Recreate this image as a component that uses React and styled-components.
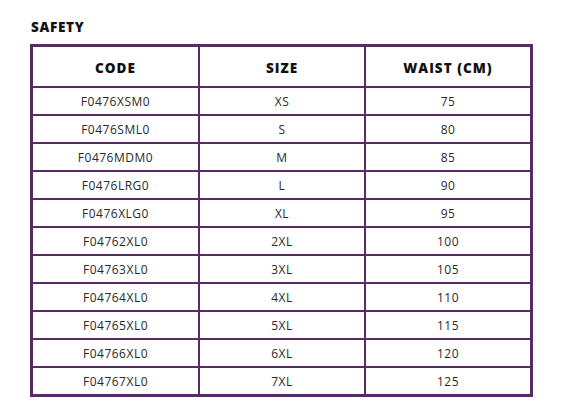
import styled, { createGlobalStyle } from "styled-components";

const Global = createGlobalStyle`
  body {
    margin: 0;
    background: #fff;
    font-family: "Open Sans", "Liberation Sans", sans-serif;
    color: #1e1e1e;
  }
`;

const Page = styled.div`
  padding: 19px 30px 0 30px;
  width: 503px;
`;

const Title = styled.h2`
  margin: 0 0 9px 1px;
  font-size: 13.5px;
  line-height: 16px;
  font-weight: 800;
  letter-spacing: 0.7px;
  color: #111;
`;

const Grid = styled.div`
  display: grid;
  grid-template-columns: 165px 164px 164px;
  grid-auto-rows: 26px;
  grid-template-rows: 39px;
  gap: 2px;
  border: 3px solid #582a66;
  background: #582a66;
`;

const Cell = styled.div`
  background: #fff;
  display: flex;
  align-items: center;
  justify-content: center;
  font-size: ${(p) => (p.head ? "13.5px" : "12px")};
  font-weight: ${(p) => (p.head ? 800 : 400)};
  letter-spacing: ${(p) => (p.head ? "1px" : "0.5px")};
  color: ${(p) => (p.head ? "#111" : "#2a2a2a")};
  padding-top: ${(p) => (p.head ? "2px" : "1px")};
`;

const rows = [
  ["F0476XSM0", "XS", "75"],
  ["F0476SML0", "S", "80"],
  ["F0476MDM0", "M", "85"],
  ["F0476LRG0", "L", "90"],
  ["F0476XLG0", "XL", "95"],
  ["F04762XL0", "2XL", "100"],
  ["F04763XL0", "3XL", "105"],
  ["F04764XL0", "4XL", "110"],
  ["F04765XL0", "5XL", "115"],
  ["F04766XL0", "6XL", "120"],
  ["F04767XL0", "7XL", "125"],
];

export default function App() {
  return (
    <>
      <Global />
      <Page>
        <Title>SAFETY</Title>
        <Grid>
          <Cell head>CODE</Cell>
          <Cell head>SIZE</Cell>
          <Cell head>WAIST (CM)</Cell>
          {rows.map((r) =>
            r.map((v, i) => <Cell key={r[0] + i}>{v}</Cell>)
          )}
        </Grid>
      </Page>
    </>
  );
}
